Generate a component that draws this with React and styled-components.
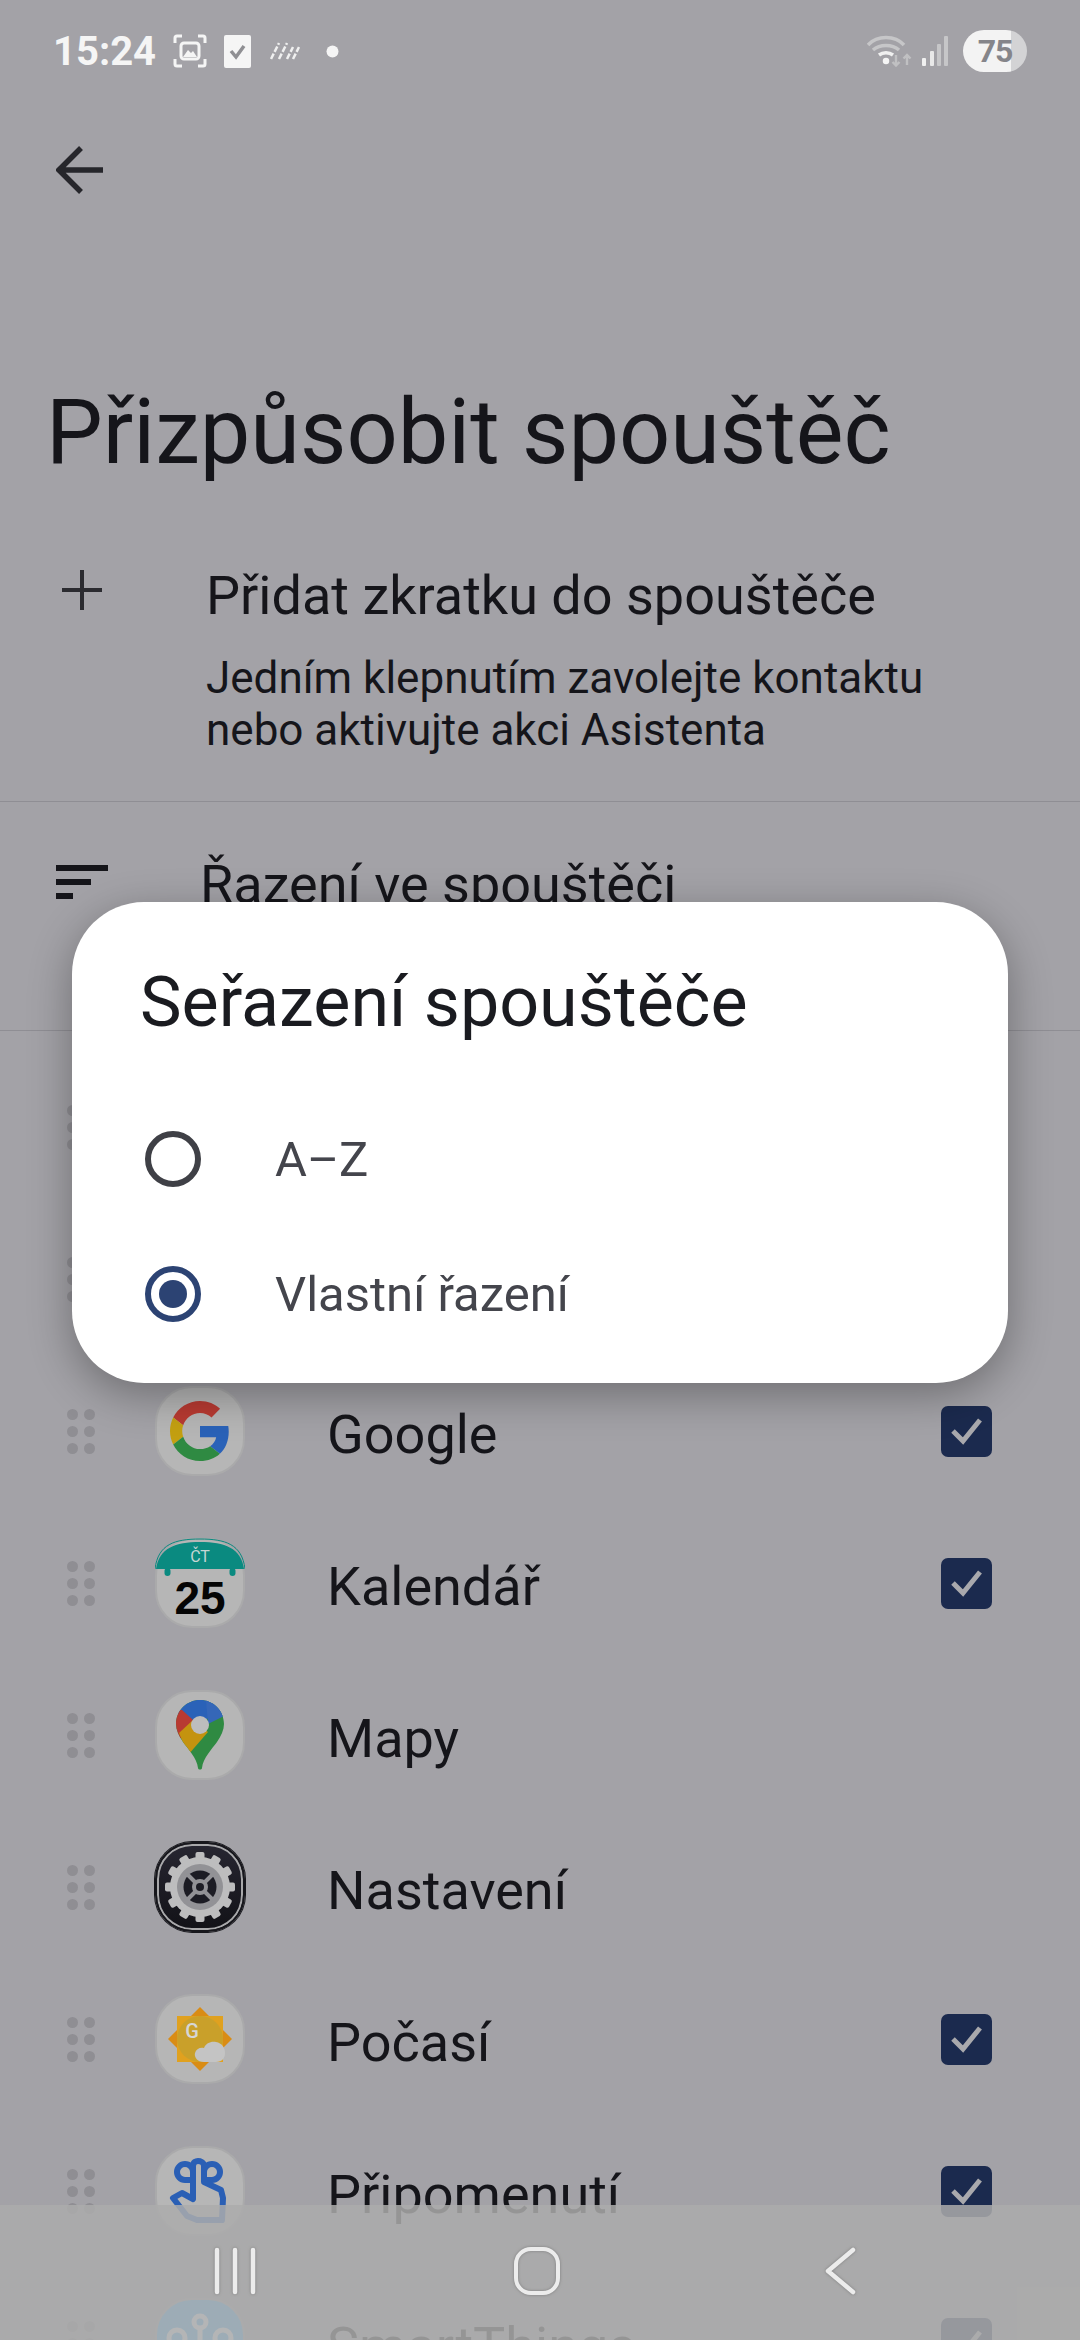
import styled, { createGlobalStyle } from 'styled-components';

const GlobalStyle = createGlobalStyle`
  html, body { margin: 0; padding: 0; background: #a3a2a7; }
  * { box-sizing: border-box; }
`;

const Page = styled.div`
  position: relative;
  width: 1080px;
  height: 2340px;
  overflow: hidden;
  background: #a3a2a7;
  color: #15151a;
  font-family: Roboto, "Noto Sans", sans-serif;
`;

const StatusBar = styled.div`
  display: flex;
  justify-content: space-between;
  align-items: center;
  height: 102px;
  padding: 0 53px 0 53px;
`;
const StatusGroup = styled.div`
  display: flex;
  align-items: center;
`;
const Time = styled.span`
  font-weight: 700;
  font-size: 40px;
  color: #f5f5f5;
  margin-right: 17px;
`;
const Battery = styled.div`
  display: flex;
  align-items: center;
  justify-content: center;
  width: 64px;
  height: 42px;
  margin-left: 15px;
  border-radius: 21px;
  background: linear-gradient(90deg, #f3f3f3 75%, #d3d3d5 75%);
  color: #85858a;
  font-weight: 700;
  font-size: 32px;
  letter-spacing: -1px;
`;

const Toolbar = styled.div`
  display: flex;
  align-items: center;
  height: 136px;
  padding-left: 56px;
`;
const Title = styled.h1`
  margin: 145px 0 0 46px;
  font-size: 90px;
  line-height: 100px;
  font-weight: 400;
`;

const SettingRow = styled.div`
  position: relative;
  height: ${(p) => p.$height}px;
  padding: ${(p) => p.$top}px 0 0 ${(p) => p.$left}px;
  border-bottom: 1px solid #8f8e94;
`;
const SettingIcon = styled.div`
  position: absolute;
  left: ${(p) => p.$x}px;
  top: ${(p) => p.$y}px;
  line-height: 0;
`;
const SettingTitle = styled.div`
  font-size: 54px;
  line-height: 64px;
`;
const SettingText = styled.div`
  margin-top: 24px;
  font-size: 44px;
  line-height: 52px;
`;

const List = styled.div`
  padding-top: 20px;
`;
const Row = styled.div`
  display: flex;
  align-items: center;
  height: 152px;
  padding: 0 88px 0 67px;
`;
const Handle = styled.div`
  display: grid;
  grid-template-columns: 11px 11px;
  grid-auto-rows: 11px;
  gap: 6px;
  width: 28px;
  margin-right: 60px;
`;
const Dot = styled.span`
  border-radius: 50%;
  background: #8f8e93;
`;
const AppIcon = styled.div`
  position: relative;
  display: flex;
  align-items: center;
  justify-content: center;
  flex: none;
  width: 90px;
  height: 90px;
  border-radius: 37px;
  background: ${(p) => p.$bg || '#b6b6b6'};
  border: 2px solid ${(p) => p.$ring || '#aaaaab'};
  box-shadow: ${(p) => (p.$dark ? '0 0 0 1px #17171c, inset 0 0 0 2px #a8a8aa' : 'none')};
`;
const AppName = styled.div`
  flex: 1;
  margin: 8px 0 0 82px;
  font-size: 54px;
  line-height: 60px;
`;
const Checkbox = styled.div`
  display: flex;
  align-items: center;
  justify-content: center;
  width: 51px;
  height: 51px;
  border-radius: 7px;
  background: #1b2a4e;
`;

const Dialog = styled.div`
  position: absolute;
  left: 72px;
  top: 902px;
  width: 936px;
  height: 481px;
  padding: 60px 0 0 68px;
  border-radius: 72px;
  background: #fff;
  box-shadow: 0 12px 44px rgba(0, 0, 0, 0.32);
`;
const DialogTitle = styled.div`
  font-size: 70px;
  line-height: 80px;
  color: #1a1b20;
  margin-bottom: 49px;
`;
const Option = styled.div`
  display: flex;
  align-items: center;
  height: 135px;
  padding: 2px 0 0 5px;
  font-size: 49px;
  color: #44454c;
`;
const Radio = styled.div`
  display: flex;
  align-items: center;
  justify-content: center;
  width: 56px;
  height: 56px;
  margin: -2px 74px 0 0;
  border-radius: 50%;
  border: 6px solid ${(p) => (p.$on ? '#2c4373' : '#3f4046')};
  &::after {
    content: '';
    display: ${(p) => (p.$on ? 'block' : 'none')};
    width: 28px;
    height: 28px;
    border-radius: 50%;
    background: #2c4373;
  }
`;

const NavBar = styled.div`
  position: absolute;
  left: 0;
  right: 0;
  bottom: 0;
  height: 135px;
  background: rgba(172, 172, 172, 0.85);
`;
const NavButton = styled.div`
  position: absolute;
  left: ${(p) => p.$x}px;
  top: 42px;
  line-height: 0;
  filter: drop-shadow(0 0 1.5px rgba(120, 120, 120, 0.9));
`;

const Check = () => (
  <svg width="36" height="30" viewBox="0 0 36 30" fill="none">
    <path d="M4 15l10 10L31 4" stroke="#a9a9ad" strokeWidth="5" />
  </svg>
);

const GoogleIcon = () => (
  <svg width="60" height="60" viewBox="0 0 48 48">
    <path fill="#b83a32" d="M24 9.5c3.54 0 6.71 1.22 9.21 3.6l6.85-6.85C35.9 2.38 30.47 0 24 0 14.62 0 6.51 5.38 2.56 13.22l7.98 6.19C12.43 13.72 17.74 9.5 24 9.5z" />
    <path fill="#2a62b8" d="M46.98 24.55c0-1.57-.15-3.09-.38-4.55H24v9.02h12.94c-.58 2.96-2.26 5.48-4.78 7.18l7.73 6c4.51-4.18 7.09-10.36 7.09-17.65z" />
    <path fill="#c4a011" d="M10.53 28.59c-.5-1.45-.78-2.99-.78-4.59s.27-3.14.78-4.59l-7.98-6.19C.92 16.46 0 20.12 0 24c0 3.88.92 7.54 2.56 10.78l7.97-6.19z" />
    <path fill="#2f8a42" d="M24 48c6.48 0 11.93-2.13 15.89-5.81l-7.73-6c-2.15 1.45-4.92 2.3-8.16 2.3-6.26 0-11.57-4.22-13.47-9.91l-7.98 6.19C6.51 42.62 14.62 48 24 48z" />
  </svg>
);

const CalendarIcon = () => (
  <svg width="90" height="90" viewBox="0 0 90 90" style={{ position: 'absolute', left: -2, top: -2 }}>
    <path d="M0 31C3 6 20 1 45 1s42 5 45 30" fill="none" stroke="#0a8a80" strokeWidth="1" />
    <path d="M1 31C4 10 20 4 45 4s41 6 44 27z" fill="#0a8a80" />
    <rect x="9.5" y="30" width="6" height="8" rx="3" fill="#0a8a80" />
    <rect x="74.5" y="30" width="6" height="8" rx="3" fill="#0a8a80" />
    <text x="45" y="24" textAnchor="middle" fontFamily="Roboto, sans-serif" fontSize="16" fill="#c6d6d4">ČT</text>
    <text x="45" y="76" textAnchor="middle" fontFamily="Liberation Sans, sans-serif" fontWeight="700" fontSize="46" fill="#050505">25</text>
  </svg>
);

const MapsIcon = () => (
  <svg width="48" height="70" viewBox="0 0 48 70">
    <clipPath id="pin">
      <path d="M24 0C10.7 0 0 10.7 0 24c0 6 3 12 7 18 5 7 14 16 15 26 .2 2 3.8 2 4 0 1-10 10-19 15-26 4-6 7-12 7-18C48 10.7 37.3 0 24 0z" />
    </clipPath>
    <g clipPath="url(#pin)">
      <rect width="48" height="70" fill="#2f8a42" />
      <path d="M0 0h48v16L32 18 14 34 0 12z" fill="#2a62b8" />
      <path d="M30 0h18v16l-16 8z" fill="#3567b8" />
      <path d="M-2 34V10h8l10 9 2 2-14 18z" fill="#b83a32" />
      <path d="M3 34l14-13 15 12-20 23z" fill="#c4930f" transform="translate(0 -1)" />
    </g>
    <circle cx="24" cy="25" r="9" fill="#bdbdbd" />
  </svg>
);

const SettingsIcon = () => {
  const teeth = Array.from({ length: 12 }, (_, i) => i * 30);
  return (
    <svg width="70" height="70" viewBox="0 0 70 70">
      <g fill="#bdbdbe">
        <circle cx="35" cy="35" r="30" />
        {teeth.map((a) => (
          <rect key={a} x="30.5" y="0" width="9" height="10" rx="2" transform={`rotate(${a} 35 35)`} />
        ))}
      </g>
      <circle cx="35" cy="35" r="23" fill="#929296" />
      <circle cx="35" cy="35" r="16.5" fill="#1c1c24" />
      <path d="M22 22l26 26M48 22L22 48" stroke="#929296" strokeWidth="4" />
      <circle cx="35" cy="35" r="8" fill="#929296" />
      <circle cx="35" cy="35" r="4" fill="#1c1c24" />
    </svg>
  );
};

const WeatherIcon = () => (
  <svg width="66" height="66" viewBox="0 0 66 66">
    <path d="M33 1l32 32-32 32L1 33z" fill="#d98c15" />
    <rect x="10" y="10" width="46" height="46" fill="#e0a11f" />
    <circle cx="33" cy="33" r="23" fill="#c9a02a" />
    <text x="25" y="32" textAnchor="middle" fontFamily="Roboto, sans-serif" fontWeight="500" fontSize="20" fill="#d6d6d6">G</text>
    <path d="M37 56c-7 0-10-5-9-9 1-4 5-6 9-5 2-5 7-7 12-6 6 1 9 6 9 11s-3 9-9 9z" fill="#c4c4c4" />
  </svg>
);

const ReminderIcon = () => (
  <svg width="90" height="90" viewBox="0 0 90 90" fill="none" style={{ position: 'absolute', left: -2, top: -2 }}>
    <path d="M38 34h-8a8 8 0 1 1 8-8zM52 34h5a8 8 0 1 0-8-8" stroke="#2a5fb5" strokeWidth="6" />
    <path d="M38 20c0-4 3-5 5-5s6 1 6 5v16l17 8 2 8-1 22H42L32 70 18 52l9-5 11 6z" stroke="#2a5fb5" strokeWidth="6" strokeLinejoin="round" />
  </svg>
);

const ThingsIcon = () => (
  <svg width="90" height="90" viewBox="0 0 90 90" fill="none" style={{ position: 'absolute', left: -2, top: -2 }}>
    <path d="M45 30v18" stroke="#e4e8ee" strokeWidth="5" />
    <circle cx="45" cy="24" r="6" stroke="#e4e8ee" strokeWidth="5" />
    <circle cx="22" cy="40" r="8" stroke="#e4e8ee" strokeWidth="5" />
    <circle cx="68" cy="40" r="8" stroke="#e4e8ee" strokeWidth="5" />
  </svg>
);

const apps = [
  { name: '', hidden: true },
  { name: '', hidden: true },
  { name: 'Google', checked: true, icon: <GoogleIcon /> },
  { name: 'Kalendář', checked: true, icon: <CalendarIcon /> },
  { name: 'Mapy', icon: <MapsIcon /> },
  { name: 'Nastavení', icon: <SettingsIcon />, bg: 'linear-gradient(#272631, #121217)', ring: '#17171c', dark: true },
  { name: 'Počasí', checked: true, icon: <WeatherIcon /> },
  { name: 'Připomenutí', checked: true, icon: <ReminderIcon /> },
  { name: 'SmartThings', checked: true, icon: <ThingsIcon />, bg: '#4ab0f0' },
];

export default function App() {
  return (
    <Page>
      <GlobalStyle />
      <StatusBar>
        <StatusGroup>
          <Time>15:24</Time>
          <svg width="34" height="34" viewBox="0 0 34 34" fill="none" stroke="#f5f5f5" strokeWidth="3">
            <path d="M2 9V4q0-2 2-2h5M25 2h5q2 0 2 2v5M32 25v5q0 2-2 2h-5M9 32H4q-2 0-2-2v-5" />
            <rect x="8" y="9" width="18" height="16" rx="3" />
            <path d="M10 23l5-7 3 3 2-2 4 6z" fill="#f5f5f5" stroke="none" />
          </svg>
          <svg width="27" height="33" viewBox="0 0 27 33" style={{ marginLeft: 17 }}>
            <rect width="27" height="33" rx="2" fill="#f5f5f5" />
            <path d="M7 16l5 6 8-11" fill="none" stroke="#8f8f93" strokeWidth="3.5" />
          </svg>
          <svg width="30" height="18" viewBox="0 0 30 18" fill="none" stroke="#f0f0f0" strokeWidth="2.5" strokeDasharray="6 2" style={{ marginLeft: 19 }}>
            <path d="M1 17L9 1M9 17L17 1M17 17L23 5M23 17L29 5" />
          </svg>
          <svg width="13" height="13" viewBox="0 0 13 13" style={{ marginLeft: 26 }}>
            <circle cx="6.5" cy="6.5" r="6" fill="#f5f5f5" />
          </svg>
        </StatusGroup>
        <StatusGroup>
          <svg width="46" height="32" viewBox="0 0 46 32" fill="none" stroke="#c6c6c8" strokeWidth="3.5">
            <path d="M1 10C10 0 28 0 37 10" />
            <path d="M6 15c7-6 19-6 26 0" />
            <path d="M12 20c4-3 10-3 14 0" stroke="#f0f0f0" />
            <circle cx="19" cy="26" r="1.5" fill="#f5f5f5" stroke="#f5f5f5" />
            <path d="M29 20v10M25.5 27l3.5 3.5 3.5-3.5M40 30V20M36.5 23.5l3.5-3.5 3.5 3.5" strokeWidth="2.4" stroke="#c0c0c2" />
          </svg>
          <svg width="26" height="30" viewBox="0 0 26 30" style={{ marginLeft: 9 }}>
            <rect x="0" y="22" width="4" height="8" rx="1" fill="#f0f0f0" />
            <rect x="8" y="15" width="4" height="15" rx="1" fill="#e8e8e8" />
            <rect x="15" y="8" width="4" height="22" rx="1" fill="#c6c6c8" />
            <rect x="22" y="0" width="4" height="30" rx="1" fill="#c6c6c8" />
          </svg>
          <Battery>75</Battery>
        </StatusGroup>
      </StatusBar>

      <Toolbar>
        <svg width="48" height="48" viewBox="0 0 48 48" fill="none" stroke="#26262b" strokeWidth="5.5">
          <path d="M47 24H4M25 2L3 24l22 22" />
        </svg>
      </Toolbar>

      <Title>Přizpůsobit spouštěč</Title>

      <SettingRow $height={319} $top={81} $left={206}>
        <SettingIcon $x={62} $y={87}>
          <svg width="40" height="40" viewBox="0 0 40 40" fill="none" stroke="#2b2b30" strokeWidth="4">
            <path d="M0 20h40M20 0v40" />
          </svg>
        </SettingIcon>
        <SettingTitle>Přidat zkratku do spouštěče</SettingTitle>
        <SettingText>
          Jedním klepnutím zavolejte kontaktu
          <br />
          nebo aktivujte akci Asistenta
        </SettingText>
      </SettingRow>

      <SettingRow $height={229} $top={51} $left={200}>
        <SettingIcon $x={56} $y={63}>
          <svg width="52" height="34" viewBox="0 0 52 34" fill="#15151a">
            <rect width="52" height="6" />
            <rect y="14" width="35" height="6" />
            <rect y="28" width="17" height="6" />
          </svg>
        </SettingIcon>
        <SettingTitle>Řazení ve spouštěči</SettingTitle>
      </SettingRow>

      <List>
        {apps.map((app, i) => (
          <Row key={i}>
            <Handle>
              {[0, 1, 2, 3, 4, 5].map((d) => <Dot key={d} />)}
            </Handle>
            {!app.hidden && (
              <>
                <AppIcon $bg={app.bg} $ring={app.ring} $dark={app.dark}>{app.icon}</AppIcon>
                <AppName>{app.name}</AppName>
                {app.checked && <Checkbox><Check /></Checkbox>}
              </>
            )}
          </Row>
        ))}
      </List>

      <Dialog>
        <DialogTitle>Seřazení spouštěče</DialogTitle>
        <Option><Radio />A–Z</Option>
        <Option><Radio $on />Vlastní řazení</Option>
      </Dialog>

      <NavBar>
        <NavButton $x={212}>
          <svg width="46" height="48" viewBox="0 0 46 48" stroke="#ececec" strokeWidth="4.5" strokeLinecap="round">
            <path d="M5 3v42M23 3v42M41 3v42" />
          </svg>
        </NavButton>
        <NavButton $x={514}>
          <svg width="46" height="48" viewBox="0 0 46 48" fill="none" stroke="#ececec" strokeWidth="4">
            <rect x="2" y="2" width="42" height="44" rx="15" />
          </svg>
        </NavButton>
        <NavButton $x={824}>
          <svg width="32" height="48" viewBox="0 0 32 48" fill="none" stroke="#ececec" strokeWidth="4.5" strokeLinecap="round" strokeLinejoin="round">
            <path d="M29 3L4 24l25 21" />
          </svg>
        </NavButton>
      </NavBar>
    </Page>
  );
}
